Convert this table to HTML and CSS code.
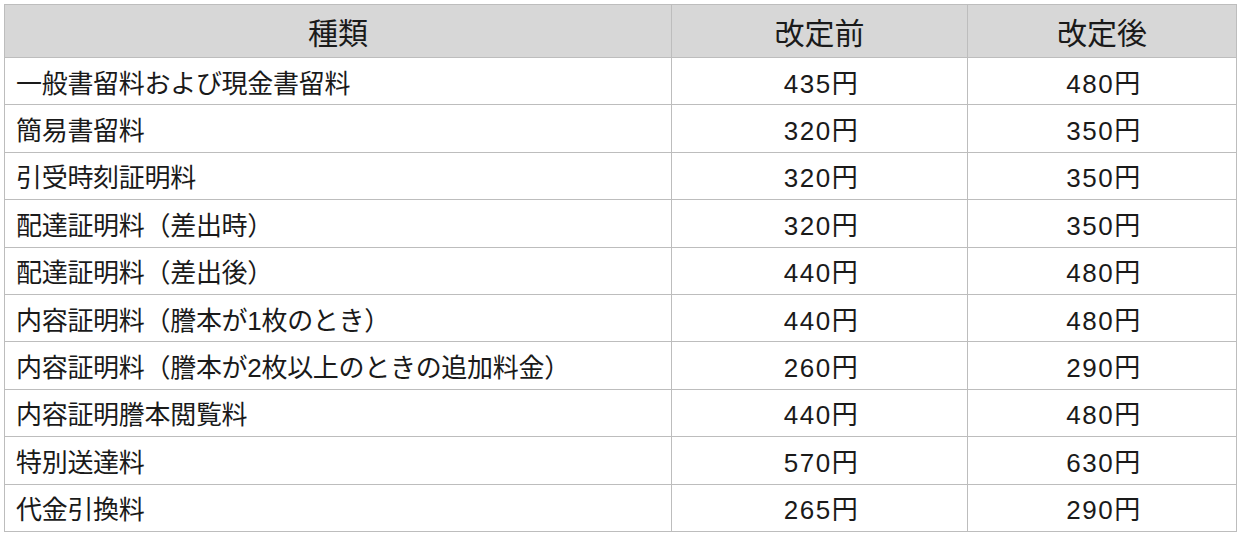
FILE: index.html
```html
<!DOCTYPE html>
<html lang="ja">
<head>
<meta charset="utf-8">
<link rel="stylesheet" href="styles.css">
</head>
<body>
<table class="fees">
  <colgroup>
    <col class="c-kind">
    <col class="c-before">
    <col class="c-after">
  </colgroup>
  <thead>
    <tr><th>種類</th><th>改定前</th><th>改定後</th></tr>
  </thead>
  <tbody>
    <tr><td class="kind">一般書留料および現金書留料</td><td class="val">435円</td><td class="val">480円</td></tr>
    <tr><td class="kind">簡易書留料</td><td class="val">320円</td><td class="val">350円</td></tr>
    <tr><td class="kind">引受時刻証明料</td><td class="val">320円</td><td class="val">350円</td></tr>
    <tr><td class="kind">配達証明料（差出時）</td><td class="val">320円</td><td class="val">350円</td></tr>
    <tr><td class="kind">配達証明料（差出後）</td><td class="val">440円</td><td class="val">480円</td></tr>
    <tr><td class="kind">内容証明料（謄本が1枚のとき）</td><td class="val">440円</td><td class="val">480円</td></tr>
    <tr><td class="kind">内容証明料（謄本が2枚以上のときの追加料金）</td><td class="val">260円</td><td class="val">290円</td></tr>
    <tr><td class="kind">内容証明謄本閲覧料</td><td class="val">440円</td><td class="val">480円</td></tr>
    <tr><td class="kind">特別送達料</td><td class="val">570円</td><td class="val">630円</td></tr>
    <tr><td class="kind">代金引換料</td><td class="val">265円</td><td class="val">290円</td></tr>
  </tbody>
</table>
</body>
</html>
```

FILE: styles.css
```css
html, body {
  margin: 0;
  padding: 0;
  background: #ffffff;
}
body {
  padding: 4px 0 0 4px;
  font-family: "Liberation Sans", "Noto Sans CJK JP", sans-serif;
  color: #1a1a1a;
}
.fees {
  border-collapse: collapse;
  width: 1232px;
  table-layout: fixed;
}
.c-kind { width: 667px; }
.c-before { width: 296px; }
.c-after { width: 269px; }
.fees th,
.fees td {
  border: 1px solid #bdbdbd;
  padding: 0;
  text-align: center;
  vertical-align: middle;
  white-space: nowrap;
}
.fees th {
  background: #d7d7d7;
  font-weight: 400;
  font-size: 30px;
  height: 52px;
}
.fees td {
  font-size: 26px;
  height: 46.4px;
}
.fees td.kind {
  text-align: left;
  padding-left: 11px;
  letter-spacing: -0.3px;
}
.fees td.val {
  letter-spacing: 1.5px;
  padding-left: 4px;
}
```
